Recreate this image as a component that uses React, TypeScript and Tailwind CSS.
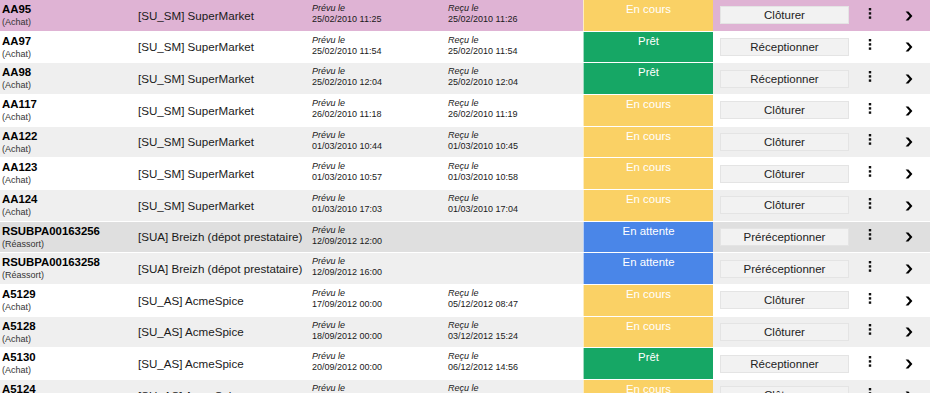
import React from 'react'

type Status = 'cours' | 'pret' | 'attente'

interface Row {
  id: string
  kind: string
  supplier: string
  planned: string
  received?: string
  status: Status
}

const rows: Row[] = [
  { id: 'AA95', kind: 'Achat', supplier: '[SU_SM] SuperMarket', planned: '25/02/2010 11:25', received: '25/02/2010 11:26', status: 'cours' },
  { id: 'AA97', kind: 'Achat', supplier: '[SU_SM] SuperMarket', planned: '25/02/2010 11:54', received: '25/02/2010 11:54', status: 'pret' },
  { id: 'AA98', kind: 'Achat', supplier: '[SU_SM] SuperMarket', planned: '25/02/2010 12:04', received: '25/02/2010 12:04', status: 'pret' },
  { id: 'AA117', kind: 'Achat', supplier: '[SU_SM] SuperMarket', planned: '26/02/2010 11:18', received: '26/02/2010 11:19', status: 'cours' },
  { id: 'AA122', kind: 'Achat', supplier: '[SU_SM] SuperMarket', planned: '01/03/2010 10:44', received: '01/03/2010 10:45', status: 'cours' },
  { id: 'AA123', kind: 'Achat', supplier: '[SU_SM] SuperMarket', planned: '01/03/2010 10:57', received: '01/03/2010 10:58', status: 'cours' },
  { id: 'AA124', kind: 'Achat', supplier: '[SU_SM] SuperMarket', planned: '01/03/2010 17:03', received: '01/03/2010 17:04', status: 'cours' },
  { id: 'RSUBPA00163256', kind: 'Réassort', supplier: '[SUA] Breizh (dépot prestataire)', planned: '12/09/2012 12:00', status: 'attente' },
  { id: 'RSUBPA00163258', kind: 'Réassort', supplier: '[SUA] Breizh (dépot prestataire)', planned: '12/09/2012 16:00', status: 'attente' },
  { id: 'A5129', kind: 'Achat', supplier: '[SU_AS] AcmeSpice', planned: '17/09/2012 00:00', received: '05/12/2012 08:47', status: 'cours' },
  { id: 'A5128', kind: 'Achat', supplier: '[SU_AS] AcmeSpice', planned: '18/09/2012 00:00', received: '03/12/2012 15:24', status: 'cours' },
  { id: 'A5130', kind: 'Achat', supplier: '[SU_AS] AcmeSpice', planned: '20/09/2012 00:00', received: '06/12/2012 14:56', status: 'pret' },
  { id: 'A5124', kind: 'Achat', supplier: '[SU_AS] AcmeSpice', planned: '21/09/2012 00:00', received: '06/12/2012 15:02', status: 'cours' },
]

const statusStyle: Record<Status, { label: string; cell: string; action: string }> = {
  cours: { label: 'En cours', cell: 'bg-[#fad165]', action: 'Clôturer' },
  pret: { label: 'Prêt', cell: 'bg-[#16a765]', action: 'Réceptionner' },
  attente: { label: 'En attente', cell: 'bg-[#4a86e8]', action: 'Préréceptionner' },
}

function Kebab() {
  return (
    <svg width="4" height="11" viewBox="0 0 4 11" className="fill-[#111]">
      <rect x="0.8" y="0" width="2.4" height="2.4" />
      <rect x="0.8" y="4.2" width="2.4" height="2.4" />
      <rect x="0.8" y="8.4" width="2.4" height="2.4" />
    </svg>
  )
}

function Chevron() {
  return (
    <svg width="8" height="10" viewBox="0 0 8 10">
      <path d="M0.6 0.6 L3.4 0.6 L7.4 5 L3.4 9.4 L0.6 9.4 L4.6 5 Z" fill="#000" />
    </svg>
  )
}

export default function App() {
  return (
    <div className="h-[393px] w-[930px] overflow-hidden bg-white font-['Liberation_Sans',Arial,sans-serif] text-[#111]">
      {rows.map((row, index) => {
        const st = statusStyle[row.status]
        const bg =
          index === 0 ? 'bg-[#dfb3d4]' : index === 7 ? 'bg-[#dfdfdf]' : index % 2 === 0 ? 'bg-[#efefef]' : 'bg-white'
        return (
          <div key={row.id} className={`flex h-[31.67px] border-b border-white ${bg}`}>
            <div className="w-[136px] shrink-0 pl-[2px] pt-[2px]">
              <p className="text-[11.4px] font-bold leading-[14px] text-black">{row.id}</p>
              <p className="mt-[1px] text-[9px] leading-[11px] text-[#333]">({row.kind})</p>
            </div>
            <div className="flex w-[175px] shrink-0 items-center whitespace-nowrap pl-[2px] text-[11.6px] text-[#1a1a1a]">
              {row.supplier}
            </div>
            <div className="w-[136px] shrink-0 pl-[1px] pt-[3px] text-[9px] leading-[11px] text-[#1a1a1a]">
              <p className="italic">Prévu le</p>
              <p>{row.planned}</p>
            </div>
            <div className="w-[136px] shrink-0 pl-[1px] pt-[3px] text-[9px] leading-[11px] text-[#1a1a1a]">
              {row.received && (
                <>
                  <p className="italic">Reçu le</p>
                  <p>{row.received}</p>
                </>
              )}
            </div>
            <div
              className={`w-[130px] shrink-0 border-l border-white/60 pt-[2px] text-center text-[11.4px] leading-[15px] text-white ${st.cell}`}
            >
              {st.label}
            </div>
            <div className="flex w-[143px] shrink-0 items-center pl-[7px]">
              <button className="h-[18px] w-[129px] border border-[#e4e4e4] bg-[#f2f2f2] text-[11.5px] leading-[16px] text-[#222]">
                {st.action}
              </button>
            </div>
            <div className="flex w-[28px] shrink-0 items-center justify-center pb-[4px]">
              <Kebab />
            </div>
            <div className="flex w-[50px] shrink-0 items-center justify-center pt-[1px]">
              <Chevron />
            </div>
          </div>
        )
      })}
    </div>
  )
}
